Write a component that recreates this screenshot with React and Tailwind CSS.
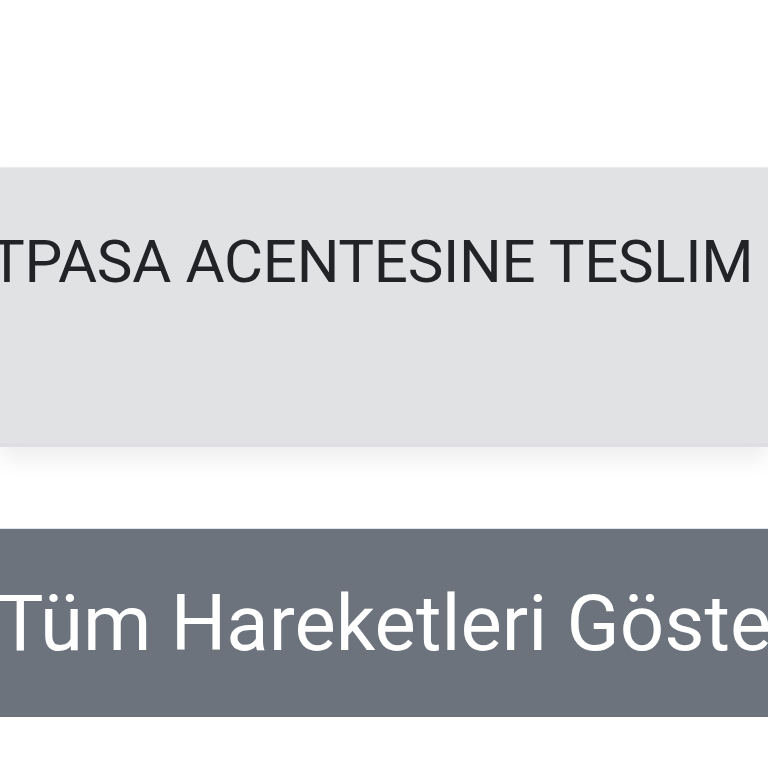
export default function App() {
  return (
    <div className="flex flex-col w-[768px] h-[768px] overflow-hidden bg-white" style={{ fontFamily: "Roboto, 'Noto Sans', sans-serif" }}>
      <div className="h-[167px] shrink-0" />

      <div className="h-[280px] shrink-0 overflow-hidden bg-[#e1e2e4] border-t border-[#ebebed] border-b-4 border-b-[#dfdfe3] shadow-[0_12px_22px_rgba(0,0,0,0.07)]">
        <div className="pt-[49px] ml-[-11px] whitespace-nowrap text-[60px] leading-normal tracking-[-0.3px] text-[#222326]">
          TPASA ACENTESINE TESLIM
        </div>
      </div>

      <div className="h-[81px] shrink-0" />

      <button className="h-[189px] shrink-0 flex items-center overflow-hidden bg-[#6c737c] border-t border-[#dfe5ec] text-white">
        <span className="ml-[-3px] whitespace-nowrap text-[78px] leading-normal">
          Tüm Hareketleri Göster
        </span>
      </button>
    </div>
  );
}
